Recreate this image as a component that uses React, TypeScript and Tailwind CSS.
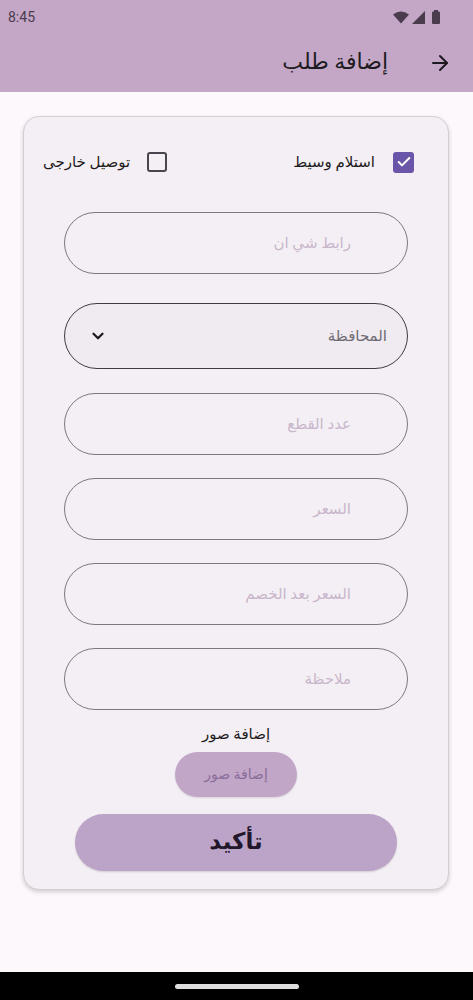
import React from "react";
import { ArrowRight, ChevronDown, Check } from "lucide-react";

const font = { fontFamily: "Roboto, 'DejaVu Sans', sans-serif" };

function TextField({ placeholder, mt }: { placeholder: string; mt: string }) {
  return (
    <div
      className={`${mt} mx-auto w-[344px] h-[62px] rounded-full border border-[#7d787f] flex items-center pr-[56px] text-[15px] text-[#c8b6cb]`}
    >
      {placeholder}
    </div>
  );
}

export default function App() {
  return (
    <div dir="rtl" style={font} className="w-[473px] h-[1000px] bg-[#fdf8fc] flex flex-col overflow-hidden">
      {/* status bar */}
      <div dir="ltr" className="h-[34px] bg-[#c4a6c6] flex items-center justify-between pl-[8px] pr-[32px]">
        <span className="text-[14px] text-[#4b3c4d]" style={{ fontFamily: "Roboto, sans-serif" }}>8:45</span>
        <div className="flex items-center gap-[3px]">
          <svg width="16" height="13" viewBox="0 0 16 13">
            <path d="M0 3.5 Q8 -2.5 16 3.5 L8 12.5 Z" fill="#4b3c4d" />
          </svg>
          <svg width="13" height="13" viewBox="0 0 13 13">
            <path d="M13 0 L13 13 L0 13 Z" fill="#4b3c4d" />
          </svg>
          <svg width="10" height="14" viewBox="0 0 10 14" className="ml-[3px]">
            <rect x="3" y="0" width="4" height="2" fill="#4b3c4d" />
            <rect x="1" y="1.5" width="8" height="12.5" rx="1" fill="#4b3c4d" />
          </svg>
        </div>
      </div>
      {/* app bar */}
      <div className="h-[58px] bg-[#c4a6c6] flex items-center pr-[21px]">
        <ArrowRight size={24} strokeWidth={2} className="text-[#1d1b20]" />
        <span className="mr-[40px] text-[22px] text-[#1d1b20] -mt-[4px]">إضافة طلب</span>
      </div>

      {/* body */}
      <div className="flex-1 pr-[24px] pl-[23px] pt-[24px]">
        <div className="w-[426px] rounded-[16px] bg-[#f4eff4] border border-[#d3ced4] shadow-[0_2px_4px_rgba(0,0,0,0.18)] pt-[24px] pb-[18px]">
          {/* checkbox row */}
          <div className="flex items-center justify-between pr-[34px] pl-[19px] h-[42px]">
            <div className="flex items-center gap-[18px]">
              <div className="w-[21px] h-[21px] rounded-[3px] bg-[#6a55a8] flex items-center justify-center">
                <Check size={16} strokeWidth={3} className="text-white" />
              </div>
              <span className="text-[15px] text-[#1d1b20]">استلام وسيط</span>
            </div>
            <div className="flex items-center gap-[17px]">
              <div className="w-[20px] h-[20px] rounded-[3px] border-2 border-[#49454f]" />
              <span className="text-[15px] text-[#1d1b20]">توصيل خارجى</span>
            </div>
          </div>

          <TextField placeholder="رابط شي ان" mt="mt-[29px]" />

          {/* select */}
          <div className="mt-[29px] mx-auto w-[344px] h-[66px] rounded-full border border-[#3f3b42] bg-[#efebf0] flex items-center justify-between pr-[20px] pl-[24px]">
            <span className="text-[15px] text-[#6f6a73]">المحافظة</span>
            <ChevronDown size={18} strokeWidth={3} className="text-[#1d1b20]" />
          </div>

          <TextField placeholder="عدد القطع" mt="mt-[24px]" />
          <TextField placeholder="السعر" mt="mt-[23px]" />
          <TextField placeholder="السعر بعد الخصم" mt="mt-[23px]" />
          <TextField placeholder="ملاحظة" mt="mt-[23px]" />

          <div className="mt-[13px] text-center text-[15px] text-[#1d1b20]">إضافة صور</div>

          <div className="mt-[6px] flex justify-center">
            <div className="w-[122px] h-[45px] rounded-full bg-[#c1a6c8] shadow-[0_1px_2px_rgba(0,0,0,0.12)] flex items-center justify-center text-[14px] text-[#8a6c98]">
              إضافة صور
            </div>
          </div>

          <div className="mt-[17px] flex justify-center">
            <div className="w-[322px] h-[57px] rounded-full bg-[#bca4c9] shadow-[0_1px_2px_rgba(0,0,0,0.15)] flex items-center justify-center text-[23px] font-bold text-[#21162a]">
              تأكيد
            </div>
          </div>
        </div>
      </div>

      {/* nav bar */}
      <div className="h-[28px] bg-black flex items-center justify-center">
        <div className="w-[124px] h-[5px] rounded-full bg-[#dedede]" />
      </div>
    </div>
  );
}
